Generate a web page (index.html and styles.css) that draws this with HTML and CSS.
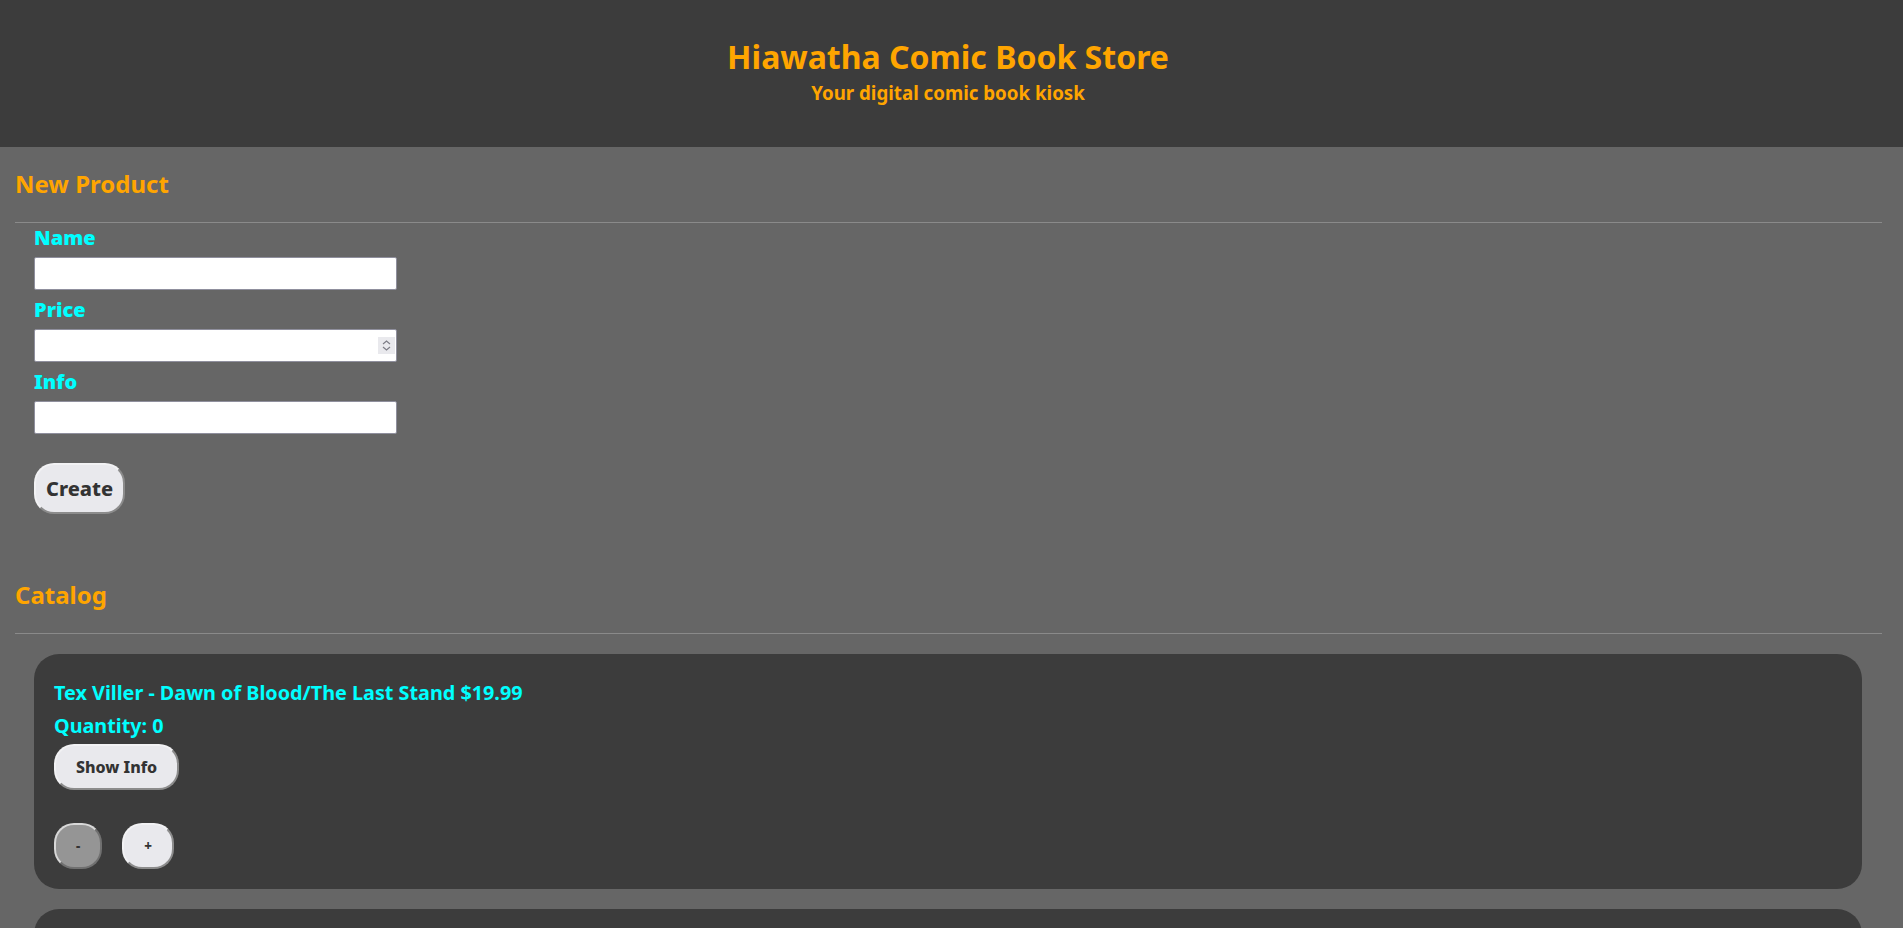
FILE: index.html
```html
<!DOCTYPE html>
<html lang="en">
<head>
<meta charset="utf-8">
<title>Hiawatha Comic Book Store</title>
<link rel="stylesheet" href="styles.css">
</head>
<body>
<header class="site-header">
  <h1 class="site-title">Hiawatha Comic Book Store</h1>
  <div class="site-subtitle">Your digital comic book kiosk</div>
</header>
<main class="content">
  <section class="section">
    <h2 class="section-title">New Product</h2>
    <div class="rule"></div>
    <form class="product-form">
      <label class="field-label" for="name">Name</label>
      <input class="field-input" id="name" type="text">
      <label class="field-label" for="price">Price</label>
      <div class="number-field">
        <input class="field-input" id="price" type="number">
        <span class="spin" aria-hidden="true">
          <svg width="17" height="17" viewBox="0 0 17 17">
            <polyline points="5,7 8.5,4 12,7" fill="none" stroke="#7d7d86" stroke-width="1.2"/>
            <polyline points="5,10 8.5,13 12,10" fill="none" stroke="#7d7d86" stroke-width="1.2"/>
          </svg>
        </span>
      </div>
      <label class="field-label" for="info">Info</label>
      <input class="field-input" id="info" type="text">
      <div class="form-actions">
        <button class="btn btn-create" type="button">Create</button>
      </div>
    </form>
  </section>
  <section class="section">
    <h2 class="section-title catalog-title">Catalog</h2>
    <div class="rule"></div>
    <div class="catalog">
      <article class="card">
        <div class="card-title">Tex Viller - Dawn of Blood/The Last Stand $19.99</div>
        <div class="card-qty">Quantity: 0</div>
        <div><button class="btn btn-info" type="button">Show Info</button></div>
        <div class="qty-controls">
          <button class="btn btn-qty btn-minus" type="button">-</button>
          <button class="btn btn-qty" type="button">+</button>
        </div>
      </article>
      <article class="card">
        <div class="card-title">Zagor - The Dark Forest $14.99</div>
        <div class="card-qty">Quantity: 0</div>
        <div><button class="btn btn-info" type="button">Show Info</button></div>
        <div class="qty-controls">
          <button class="btn btn-qty btn-minus" type="button">-</button>
          <button class="btn btn-qty" type="button">+</button>
        </div>
      </article>
    </div>
  </section>
</main>
</body>
</html>
```
FILE: styles.css
```css
* { box-sizing: border-box; }

html, body {
  margin: 0;
  padding: 0;
}

body {
  background: #666666;
  font-family: "Noto Sans", "Open Sans", sans-serif;
}

.site-header {
  background: #3c3c3c;
  padding: 35px 7px 41px 0;
  text-align: center;
  color: #ffa500;
}

.site-title {
  margin: 0;
  font-size: 32px;
  font-weight: 700;
  line-height: 44px;
}

.site-subtitle {
  font-size: 18.72px;
  font-weight: 700;
  line-height: 27px;
}

.content {
  padding: 0 21px 0 15px;
}

.section-title {
  margin: 20px 0 0;
  font-size: 24px;
  font-weight: 700;
  line-height: 33px;
  color: #ffa500;
}

.catalog-title {
  margin-top: 64px;
}

.rule {
  margin-top: 22px;
  border-top: 1px solid #8a8a8a;
}

.product-form {
  display: flex;
  flex-direction: column;
  align-items: flex-start;
  padding: 2px 0 0 19px;
}

.field-label {
  font-size: 20px;
  font-weight: 900;
  line-height: 26px;
  color: #00ffff;
  margin-bottom: 6px;
}

.field-input {
  width: 363px;
  height: 33px;
  margin: 0 0 7px;
  border: 1px solid #8f8f9d;
  border-radius: 2px;
  background: #ffffff;
  font-size: 16px;
  padding: 2px 6px;
}

.field-input::-webkit-inner-spin-button,
.field-input::-webkit-outer-spin-button {
  -webkit-appearance: none;
  margin: 0;
}

.field-input[type="number"] {
  -moz-appearance: textfield;
  padding-right: 24px;
}

.number-field {
  position: relative;
  width: 363px;
}

.spin {
  position: absolute;
  right: 2px;
  top: 8px;
  width: 17px;
  height: 17px;
  background: #e9e9ed;
  display: flex;
}

.form-actions {
  margin-top: 22px;
}

.btn {
  font-family: "Noto Sans", "Open Sans", sans-serif;
  font-weight: 800;
  color: #333333;
  background: #e9e9ed;
  border: 2px solid;
  border-color: #f2f2f4 #8c8c8c #8c8c8c #f2f2f4;
  border-radius: 20px;
  cursor: pointer;
}

.btn-create {
  font-size: 20px;
  line-height: 27px;
  padding: 10px 10px;
}

.catalog {
  padding: 20px 20px 0 19px;
}

.card {
  background: #3c3c3c;
  border-radius: 25px;
  padding: 26px 20px 20px;
  margin-bottom: 20px;
  color: #00ffff;
  font-weight: 700;
  font-size: 19.8px;
}

.card-title {
  line-height: 25px;
}

.card-qty {
  line-height: 25px;
  margin-top: 8px;
}

.btn-info {
  margin-top: 6px;
  font-size: 16px;
  line-height: 22px;
  padding: 10px 20px;
}

.qty-controls {
  display: flex;
  gap: 20px;
  margin-top: 33px;
}

.btn-qty {
  font-size: 13.33px;
  line-height: 18px;
  padding: 12px 20px;
}

.btn-minus {
  background: #959595;
  border-color: #d8d8d8 #707070 #707070 #d8d8d8;
}
```
